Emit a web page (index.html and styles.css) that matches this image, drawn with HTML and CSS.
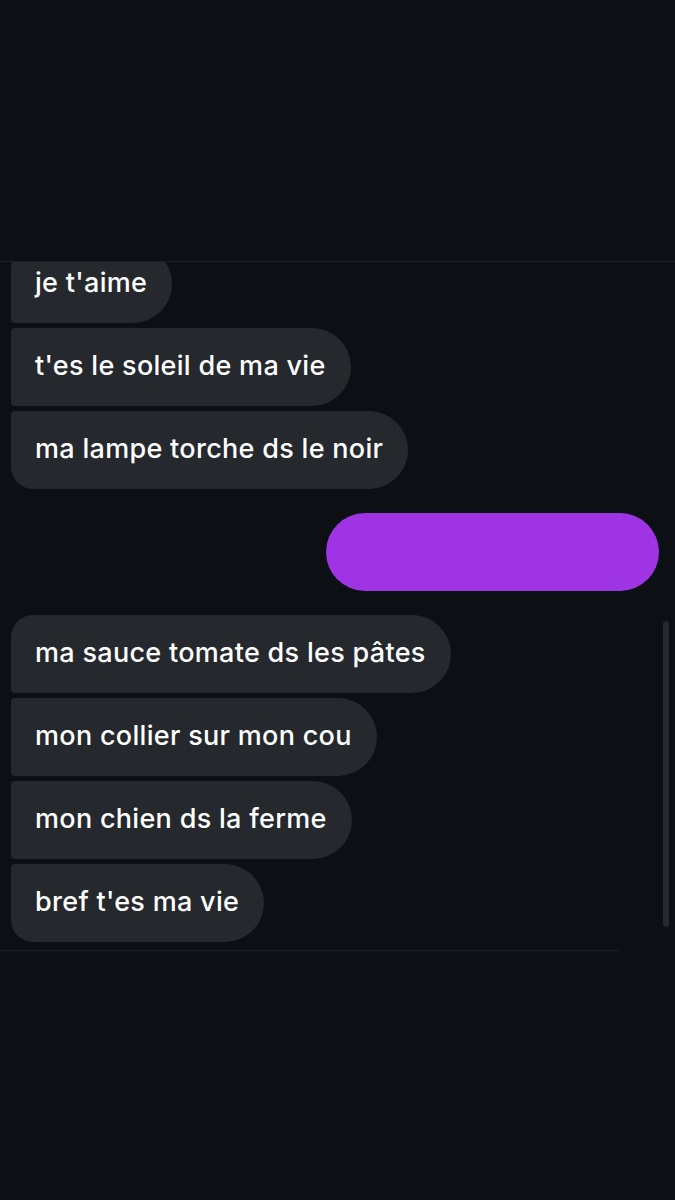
FILE: index.html
```html
<!DOCTYPE html>
<html lang="fr">
<head>
<meta charset="utf-8">
<title>Messages</title>
<link rel="stylesheet" href="styles.css">
</head>
<body>
<div class="screen">
  <header class="top"></header>
  <main class="chat">
    <div class="thread">
      <div class="group in">
        <div class="bubble first">je t'aime</div>
        <div class="bubble">t'es le soleil de ma vie</div>
        <div class="bubble last">ma lampe torche ds le noir</div>
      </div>
      <div class="group out">
        <div class="bubble mine"></div>
      </div>
      <div class="group in">
        <div class="bubble first">ma sauce tomate ds les pâtes</div>
        <div class="bubble">mon collier sur mon cou</div>
        <div class="bubble">mon chien ds la ferme</div>
        <div class="bubble last">bref t'es ma vie</div>
      </div>
    </div>
    <div class="scrollbar"></div>
  </main>
  <div class="divider"></div>
</div>
</body>
</html>
```

FILE: styles.css
```css
html, body {
  margin: 0;
  padding: 0;
  background: #0c1014;
}
.screen {
  width: 675px;
  height: 1200px;
  background: #0c1014;
  overflow: hidden;
  font-family: Inter, "Noto Sans", sans-serif;
}
.top {
  height: 262px;
  border-bottom: 1px solid #1b1e22;
  box-sizing: border-box;
}
.chat {
  position: relative;
  height: 688px;
  overflow: hidden;
}
.thread {
  margin-top: -17px;
  padding: 0 16px 0 11px;
  display: flex;
  flex-direction: column;
  gap: 24px;
}
.group {
  display: flex;
  flex-direction: column;
  gap: 5px;
}
.group.in { align-items: flex-start; }
.group.out { align-items: flex-end; }
.bubble {
  box-sizing: border-box;
  height: 78px;
  padding: 0 25px 3px 24px;
  display: flex;
  align-items: center;
  background: #25282d;
  color: #ffffff;
  font-size: 27px;
  font-weight: 500;
  letter-spacing: 0.3px;
  white-space: nowrap;
  border-radius: 4px 39px 39px 4px;
}
.bubble.first { border-top-left-radius: 22px; }
.bubble.last { border-bottom-left-radius: 22px; }
.bubble.mine {
  width: 333px;
  background: #9e34e4;
  border-radius: 39px;
}
.scrollbar {
  position: absolute;
  left: 663px;
  top: 359px;
  width: 6px;
  height: 306px;
  border-radius: 3px;
  background: #26292d;
}
.divider {
  width: 620px;
  height: 1px;
  background: #1b1e22;
}
```
